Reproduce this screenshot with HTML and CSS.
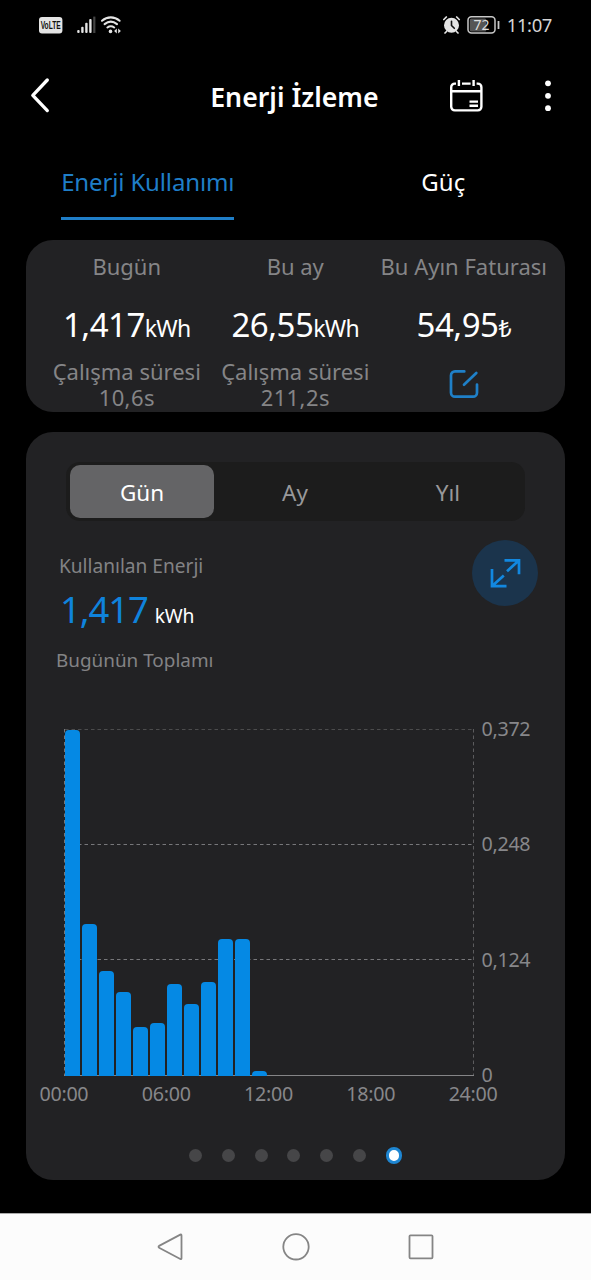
FILE: index.html
```html
<!DOCTYPE html>
<html lang="tr">
<head>
<meta charset="utf-8">
<title>Enerji İzleme</title>
<link rel="stylesheet" href="styles.css">
</head>
<body>
<div class="screen">
  <div class="status">
    <svg class="status-left" width="90" height="24" viewBox="0 0 90 24">
      <rect x="1" y="4" width="23.4" height="16.4" rx="3" fill="#e4e4e4"/>
      <text class="volte" x="2.7" y="15.8" textLength="20" lengthAdjust="spacingAndGlyphs">VoLTE</text>
      <g fill="#e4e4e4">
        <rect x="39.2" y="17" width="2.4" height="3" rx="1"/>
        <rect x="43.2" y="13.7" width="2.4" height="6.3" rx="1"/>
        <rect x="47.2" y="9.7" width="2.4" height="10.3" rx="1"/>
        <rect x="51.2" y="6" width="2.4" height="14" rx="1"/>
        <rect x="55.2" y="3.6" width="2.2" height="16.4" fill="#444"/>
        <circle cx="72.5" cy="18.4" r="1.8"/>
        <path d="M78.8 15.4v5.200l-2.700-2.600zM80.200 15.400v5.200l2.700-2.600z"/>
      </g>
      <g fill="none" stroke="#e4e4e4" stroke-width="2.1" stroke-linecap="round">
        <path d="M64 7.700c5.200-4.400 12.400-4.400 17.600 0"/>
        <path d="M66.600 11.100c3.800-3 8.600-3 12.400 0"/>
        <path d="M69.400 14.500c2.200-1.600 4.600-1.600 6.800 0"/>
      </g>
    </svg>
    <div class="status-right">
      <svg width="20" height="20" viewBox="0 0 20 20">
        <circle cx="8.500" cy="10.300" r="7.500" fill="#e4e4e4"/>
        <path d="M3.500 16.500l-1.500 1.500M13.500 16.500l1.500 1.500M.800 4.500l2.500-2.500M16.200 4.500l-2.500-2.500" stroke="#e4e4e4" stroke-width="1.700" stroke-linecap="round"/>
        <path d="M8.500 6.200v4.300l2.800 2.800" fill="none" stroke="#111" stroke-width="1.600" stroke-linecap="round"/>
      </svg>
      <svg class="battery" width="34" height="20" viewBox="0 0 34 20">
        <rect x="2.8" y="3.6" width="16.500" height="12.800" rx="1.500" fill="#555"/>
        <rect x="1" y="1.800" width="27" height="16.200" rx="3.500" fill="none" stroke="#c8c8c8" stroke-width="1.500"/>
        <rect x="30.600" y="6" width="1.800" height="8" fill="#c8c8c8"/>
        <text class="battery-text" x="14.600" y="14.800" text-anchor="middle">72</text>
      </svg>
      <span class="clock">11:07</span>
    </div>
  </div>

  <header class="header">
    <svg class="back" width="24" height="40" viewBox="0 0 24 40"><path d="M19.300 5 4.800 20.300 19.300 35.600" fill="none" stroke="#fff" stroke-width="3.300" stroke-linecap="round" stroke-linejoin="round"/></svg>
    <h1 class="title">Enerji İzleme</h1>
    <svg class="calendar" width="36" height="36" viewBox="0 0 36 36" fill="none" stroke="#fff" stroke-width="2.400">
      <path d="M7 5.600H5.800a3.600 3.600 0 0 0-3.600 3.600v19.600a3.600 3.600 0 0 0 3.600 3.600h23a3.600 3.600 0 0 0 3.600-3.600V9.200a3.600 3.600 0 0 0-3.600-3.600h-1.200M13 5.600h8.600M2.200 13.300h30.200M9.900 2v6M24.600 2v6M20.500 23.600h8.500M20.500 27.800h8.500"/>
    </svg>
    <svg class="more" width="8" height="36" viewBox="0 0 8 36" fill="#fff"><circle cx="4" cy="5.300" r="2.900"/><circle cx="4" cy="17.800" r="2.900"/><circle cx="4" cy="30.200" r="2.900"/></svg>
  </header>

  <nav class="tabs">
    <div class="tab"><span class="tab-label active">Enerji Kullanımı</span></div>
    <div class="tab"><span class="tab-label">Güç</span></div>
  </nav>

  <section class="card summary">
    <div class="stat">
      <div class="stat-name">Bugün</div>
      <div class="stat-value"><span class="num">1,417</span><span class="unit">kWh</span></div>
      <div class="stat-note">Çalışma süresi</div>
      <div class="stat-note digits">10,6s</div>
    </div>
    <div class="stat">
      <div class="stat-name">Bu ay</div>
      <div class="stat-value"><span class="num">26,55</span><span class="unit">kWh</span></div>
      <div class="stat-note">Çalışma süresi</div>
      <div class="stat-note digits">211,2s</div>
    </div>
    <div class="stat">
      <div class="stat-name">Bu Ayın Faturası</div>
      <div class="stat-value"><span class="num">54,95</span><span class="unit">₺</span></div>
      <svg class="edit" width="32" height="32" viewBox="0 0 32 32" fill="none" stroke="#1f80c8" stroke-width="2.700" stroke-linecap="round">
        <path d="M16.300 3.400H7a4 4 0 0 0-4 4v17.300a4 4 0 0 0 4 4h18a4 4 0 0 0 4-4V16.500M16 16.800 28.300 5"/>
      </svg>
    </div>
  </section>

  <section class="card usage">
    <div class="segmented">
      <div class="segment selected">Gün</div>
      <div class="segment">Ay</div>
      <div class="segment">Yıl</div>
    </div>
    <div class="overview">
      <div class="totals">
        <div class="caption used">Kullanılan Enerji</div>
        <div class="total"><span class="total-num">1,417</span><span class="total-unit">kWh</span></div>
        <div class="caption">Bugünün Toplamı</div>
      </div>
      <div class="expand">
        <svg width="66" height="66" viewBox="0 0 66 66" fill="none" stroke="#1288e0" stroke-width="2.700">
          <path d="M32.500 20.300H47v14M46.500 20.800 35 31.300M20 29v17.200h14.500M20.500 45.700 31.800 35.400"/>
        </svg>
      </div>
    </div>
    <div class="chart">
      <div class="plot">
        <svg class="grid" width="411" height="349" viewBox="0 0 411 349" fill="none" stroke-width="1" stroke-dasharray="3.500 3">
          <path d="M1 1.500h409" stroke="#4c4c4d"/>
          <path d="M1 116.500h409M1 231.500h409" stroke="#77777a"/>
          <path d="M.500 1v346" stroke="#77777a"/>
          <path d="M409.500 1v346" stroke="#5c5c5e"/>
          <path d="M0 347.500h410" stroke="#858587" stroke-dasharray="none"/>
        </svg>
        <div class="bars">
          <i class="bar" style="height:346px"></i>
          <i class="bar" style="height:152px"></i>
          <i class="bar" style="height:105px"></i>
          <i class="bar" style="height:84px"></i>
          <i class="bar" style="height:49px"></i>
          <i class="bar" style="height:53px"></i>
          <i class="bar" style="height:92px"></i>
          <i class="bar" style="height:72px"></i>
          <i class="bar" style="height:94px"></i>
          <i class="bar" style="height:137.500px"></i>
          <i class="bar" style="height:137.500px"></i>
          <i class="bar" style="height:5px"></i>
        </div>
      </div>
      <div class="y-axis"><span>0,372</span><span>0,248</span><span>0,124</span><span>0</span></div>
      <div class="x-axis"><span>00:00</span><span>06:00</span><span>12:00</span><span>18:00</span><span>24:00</span></div>
    </div>
    <div class="pager">
      <i class="dot"></i><i class="dot"></i><i class="dot"></i><i class="dot"></i><i class="dot"></i><i class="dot"></i><i class="dot current"></i>
    </div>
  </section>

  <footer class="navbar">
    <svg width="30" height="30" viewBox="0 0 30 30"><path d="M4.100 13.900 25.300 2.600q1.200-.500 1.200.800v22.800q0 1.300-1.200.800L4.100 15.700a1 1 0 0 1 0-1.800z"/></svg>
    <svg width="30" height="30" viewBox="0 0 30 30"><circle cx="15" cy="14.800" r="12.700"/></svg>
    <svg width="30" height="30" viewBox="0 0 30 30"><rect x="3.500" y="3.300" width="23" height="23" rx="1"/></svg>
  </footer>
</div>
</body>
</html>
```
FILE: styles.css
```css
* { box-sizing: border-box; }
body { margin: 0; background: #000; font-family: "Noto Sans", "Open Sans", sans-serif; color: #fff; }
.screen { width: 591px; height: 1280px; display: flex; flex-direction: column; overflow: hidden; }
.screen svg { display: block; flex: none; }

.status { height: 50px; display: flex; justify-content: space-between; padding: 13px 39px 0 38px; color: #d4d4d4; }
.volte { font: 700 10.5px "Liberation Sans", sans-serif; fill: #111; }
.status-right { display: flex; align-items: flex-start; height: 24px; padding-top: 2px; }
.battery { margin-left: 4px; }
.battery-text { font: 14px "Noto Sans", sans-serif; fill: #ddd; }
.clock { font-size: 18.5px; line-height: 20px; letter-spacing: -.4px; margin: 0 0 0 6px; }

.header { height: 95px; display: grid; grid-template-columns: 24px 1fr 36px 8px; align-items: start; padding: 27.5px 38.7px 0 27.5px; }
.title { margin: 1px 0 0; padding-left: 29px; text-align: center; font-size: 26.7px; line-height: 36px; font-weight: 600; }
.calendar { margin-left: -59px; }
.back { margin-top: -2.5px; }

.tabs { height: 94.5px; display: grid; grid-template-columns: 1fr 1fr; }
.tab { text-align: center; }
.tab-label { display: inline-block; height: 75px; padding-top: 19px; font-size: 24px; line-height: 36px; }
.tab-label.active { color: #1f7ec8; border-bottom: 3.5px solid #1f7ec8; letter-spacing: -.14px; }

.card { width: 538.5px; margin-left: 26px; background: #222224; border-radius: 27px; flex: none; }
.summary { height: 172.5px; display: grid; grid-template-columns: repeat(3, 168.5px); padding: 0 16.5px; text-align: center; white-space: nowrap; }
.stat-name { font-size: 22px; line-height: 26px; padding-top: 13px; color: #858587; }
.stat-value { height: 50px; margin: 21px 0 8px; line-height: 50px; }
.num { font-size: 33px; letter-spacing: -.5px; }
.unit { font-size: 23px; letter-spacing: -.7px; }
.stat-note { font-size: 22px; line-height: 26.5px; color: #858587; }
.digits { letter-spacing: .4px; }
.edit { margin: 18px auto 0; }

.usage { height: 748px; margin-top: 20px; padding: 30px 0 0 39.5px; }
.segmented { width: 459px; height: 59px; display: grid; grid-template-columns: repeat(3, 1fr); background: #1c1c1c; border-radius: 14px; padding: 3px 0; font-size: 22.5px; line-height: 55px; text-align: center; color: #98989a; }
.segment { height: 53px; margin: 0 4.5px; border-radius: 10px; }
.selected { background: #646466; color: #fff; }

.overview { display: flex; justify-content: space-between; padding-right: 27px; }
.totals { margin-left: -9.5px; padding-top: 32px; white-space: nowrap; }
.caption { font-size: 18.9px; line-height: 26px; color: #838385; }
.used { font-size: 19.1px; padding-left: 3px; }
.total { height: 52px; line-height: 52px; margin: 4px 0 12px 4px; }
.total-num { font-size: 36.5px; letter-spacing: -1.1px; color: #0f83dc; }
.total-unit { font-size: 19.3px; margin-left: 7px; letter-spacing: -.3px; }
.expand { width: 66px; height: 66px; margin-top: 19px; border-radius: 50%; background: #1b344c; }

.chart { display: grid; grid-template-columns: 411px 70px; grid-template-rows: 348px 28px; margin: 55px 0 0 -2px; color: #87878a; font-size: 19.7px; letter-spacing: -.3px; }
.plot { display: grid; }
.grid, .bars { grid-area: 1 / 1; }
.bars { display: flex; align-items: flex-end; gap: 2.04px; padding: 0 0 1px 1.3px; }
.bar { width: 15px; background: #0589e4; border-radius: 4px 4px 0 0; }
.y-axis { height: 364px; display: flex; flex-direction: column; justify-content: space-between; margin: -8px 0; padding-left: 7px; line-height: 18px; }
.x-axis { grid-column: 1 / 3; display: flex; justify-content: space-between; width: 458px; margin-left: -24px; padding-top: 9px; line-height: 18px; }

.pager { display: flex; align-items: center; gap: 19.8px; height: 18px; margin: 42.5px 0 0 123.5px; }
.dot { width: 13px; height: 13px; border-radius: 50%; background: #464648; }
.current { width: 16.5px; height: 16.5px; background: #fff; border: 3.3px solid #1e86d2; }

.navbar { height: 67px; margin-top: auto; background: #fcfcfc; border-top: 1px solid #aaa; display: flex; justify-content: center; gap: 95.5px; padding-top: 18px; flex: none; }
.navbar svg { fill: none; stroke: #858585; stroke-width: 1.8; }
```
